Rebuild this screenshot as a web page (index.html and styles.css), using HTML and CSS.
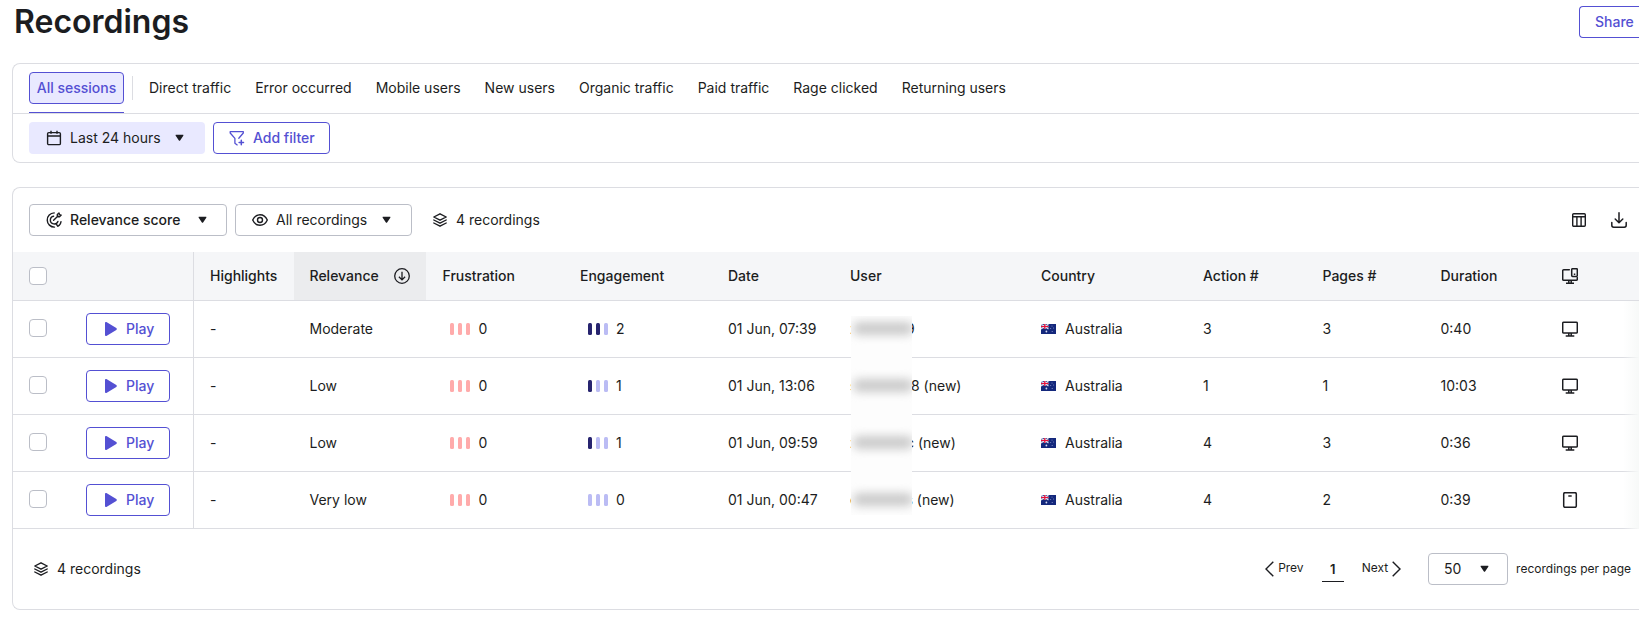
FILE: index.html
```html
<!DOCTYPE html>
<html lang="en">
<head>
<meta charset="utf-8">
<title>Recordings</title>
<link rel="stylesheet" href="styles.css">
</head>
<body>
<svg class="sprite" aria-hidden="true">
  <symbol id="i-caret" viewBox="0 0 9 8"><path d="M1.2.8h6.6c.6 0 .8.5.5.9L5.1 6.4c-.3.5-.9.5-1.2 0L.7 1.7C.4 1.300.6.8 1.200.8z" fill="currentColor"/></symbol>
  <symbol id="i-calendar" viewBox="0 0 16 16"><g fill="none" stroke="currentColor" stroke-width="1.400"><rect x="1.600" y="2.600" width="12.800" height="12" rx="1.200"/><path d="M1.600 6h12.800M5 .8v3M11 .8v3"/></g></symbol>
  <symbol id="i-filter" viewBox="0 0 16 16"><g fill="none" stroke="currentColor" stroke-width="1.300" stroke-linejoin="round" stroke-linecap="round"><path d="M9.800 8.200 14.300 3V1.600H1.200V3l4.700 5.400v4.800l2.300 1.700"/><path d="M12.300 10.300v4.400M10.100 12.500h4.400" stroke-width="1.500"/></g></symbol>
  <symbol id="i-target" viewBox="0 0 16 16"><g fill="none" stroke="currentColor" stroke-width="1.400" stroke-linecap="round" stroke-linejoin="round"><path d="M8.200.9A7.100 7.100 0 0 0 8.500 15.100"/><path d="M7.600 4.200a3.900 3.900 0 1 0 4.300 5.200"/><path d="M7.600 8.300 12 4M11.300 4.700V2.600L13 .9l.5 1.700 1.700.5-1.700 1.700z"/><path d="M15 9.600c-.2 1.500-.8 2.600-1.600 3.500l-1.500 1.200-1.700-2.300"/></g></symbol>
  <symbol id="i-eye" viewBox="0 0 16 16"><g fill="none" stroke="currentColor" stroke-width="1.400"><path d="M.7 8C2.200 4.600 4.900 2.700 8 2.700S13.800 4.600 15.300 8c-1.500 3.400-4.200 5.300-7.300 5.300S2.200 11.400.7 8z" stroke-linejoin="round"/><circle cx="8" cy="8" r="2.500"/></g></symbol>
  <symbol id="i-layers" viewBox="0 0 14 14"><g fill="none" stroke="currentColor" stroke-width="1.400" stroke-linejoin="round" stroke-linecap="round"><path d="m7 .8 6.200 3.200L7 7.200.8 4z"/><path d="M.8 7 7 10.200 13.200 7M.8 10 7 13.200 13.200 10"/></g></symbol>
  <symbol id="i-table" viewBox="0 0 14 14"><g fill="none" stroke="currentColor" stroke-width="1.400"><rect x=".7" y=".7" width="12.600" height="12.600" rx="1"/><path d="M.7 3.800h12.600M4.900 3.800v9.500M9.100 3.800v9.500"/></g></symbol>
  <symbol id="i-download" viewBox="0 0 16 16"><g fill="none" stroke="currentColor" stroke-width="1.500" stroke-linecap="round" stroke-linejoin="round"><path d="M8 .8v9.800M4.200 7 8 10.700 11.800 7M.8 10.500v2.800c0 1.200.8 1.900 1.900 1.900h10.600c1.100 0 1.900-.7 1.900-1.900v-2.800"/></g></symbol>
  <symbol id="i-sort" viewBox="0 0 16 16"><g fill="none" stroke="currentColor" stroke-width="1.300"><circle cx="8" cy="8" r="7.300"/><path d="M8 3.800v8M4.900 8.800 8 11.900l3.100-3.100"/></g></symbol>
  <symbol id="i-devices" viewBox="0 0 16 16"><g fill="none" stroke="currentColor" stroke-width="1.500"><path d="M7.300 1.700H1.700a1 1 0 0 0-1 1v8.600a1 1 0 0 0 1 1h12.600a1 1 0 0 0 1-1V9.500" stroke-linecap="round"/><rect x="9.700" y=".7" width="5.600" height="7.800" rx=".9"/><path d="M6.800 12.300v2.500M9.200 12.300v2.500M4 15.200h8M11.800 6.300h1.500"/></g></symbol>
  <symbol id="i-desktop" viewBox="0 0 16 16"><g fill="none" stroke="currentColor" stroke-width="1.500"><rect x=".7" y="1.200" width="14.600" height="10.700" rx="1"/><path d="M6.800 12v2.500M9.200 12v2.500M3.700 15h8.600"/></g></symbol>
  <symbol id="i-tablet" viewBox="0 0 16 16"><g fill="none" stroke="currentColor" stroke-width="1.500"><rect x="1.700" y=".7" width="12.600" height="14.600" rx="1.200"/><path d="M6.300 4h3.400"/></g></symbol>
  <symbol id="i-play" viewBox="0 0 12 14"><path d="M1.400.1 11.300 6.100c.7.400.7 1.400 0 1.800L1.400 13.900C.7 14.200 0 13.900 0 13V1C0 .1.700-.2 1.400.1z" fill="currentColor"/></symbol>
  <symbol id="i-prev" viewBox="0 0 9 16"><path d="M8.300.7 1 8l7.300 7.300" fill="none" stroke="currentColor" stroke-width="1.400"/></symbol>
  <symbol id="i-next" viewBox="0 0 9 16"><path d="M.7.7 8 8 .7 15.300" fill="none" stroke="currentColor" stroke-width="1.400"/></symbol>
  <symbol id="flag-au" viewBox="0 0 15 10"><path fill="#14287c" d="M0 0h15v10H0z"/><path d="m0 0 7.500 5M7.500 0 0 5" stroke="#dfe3f3" stroke-width="1.100"/><path d="M3.750 0v5M0 2.500h7.500" stroke="#f3d5de" stroke-width="1.800"/><path d="M3.750 0v5M0 2.500h7.500" stroke="#e4103a" stroke-width="1.200"/><circle cx="5.400" cy="7.500" r=".9" fill="#d5daf0"/><g fill="#8f9bd0"><circle cx="11" cy="2" r=".5"/><circle cx="9.700" cy="4.500" r=".5"/><circle cx="12.600" cy="4" r=".5"/><circle cx="11.200" cy="7.500" r=".6"/></g></symbol>
</svg>

<header class="page-head">
  <h1 class="page-title">Recordings</h1>
  <button class="btn btn-outline share">Share</button>
</header>

<section class="card filters">
  <nav class="tabs">
    <div class="tab-active"><a class="pill">All sessions</a></div>
    <i class="tab-sep"></i>
    <a class="tab">Direct traffic</a>
    <a class="tab">Error occurred</a>
    <a class="tab">Mobile users</a>
    <a class="tab">New users</a>
    <a class="tab">Organic traffic</a>
    <a class="tab">Paid traffic</a>
    <a class="tab">Rage clicked</a>
    <a class="tab">Returning users</a>
  </nav>
  <div class="filter-row">
    <button class="btn btn-date"><svg class="ic16"><use href="#i-calendar"/></svg>Last 24 hours<svg class="caret"><use href="#i-caret"/></svg></button>
    <button class="btn btn-outline btn-add"><svg class="ic16"><use href="#i-filter"/></svg>Add filter</button>
  </div>
</section>

<section class="card list">
  <div class="toolbar">
    <button class="btn btn-select score"><svg class="ic16"><use href="#i-target"/></svg>Relevance score<svg class="caret"><use href="#i-caret"/></svg></button>
    <button class="btn btn-select all"><svg class="ic16"><use href="#i-eye"/></svg>All recordings<svg class="caret"><use href="#i-caret"/></svg></button>
    <span class="count"><svg class="ic14"><use href="#i-layers"/></svg>4 recordings</span>
    <span class="tools"><svg class="ic14"><use href="#i-table"/></svg><svg class="ic16"><use href="#i-download"/></svg></span>
  </div>

  <div class="table">
    <div class="row head">
      <div class="cell lead"><i class="check"></i></div>
      <div class="cell">Highlights</div>
      <div class="cell rel sorted">Relevance<svg class="ic16"><use href="#i-sort"/></svg></div>
      <div class="cell">Frustration</div>
      <div class="cell">Engagement</div>
      <div class="cell">Date</div>
      <div class="cell">User</div>
      <div class="cell">Country</div>
      <div class="cell">Action #</div>
      <div class="cell">Pages #</div>
      <div class="cell">Duration</div>
      <div class="cell"><svg class="ic16"><use href="#i-devices"/></svg></div>
    </div>
    <div class="row">
      <div class="cell lead"><i class="check"></i><button class="btn btn-outline play"><svg><use href="#i-play"/></svg>Play</button></div>
      <div class="cell">-</div>
      <div class="cell rel">Moderate</div>
      <div class="cell score-cell"><span class="bars frus"><i></i><i></i><i></i></span>0</div>
      <div class="cell score-cell"><span class="bars eng"><i class="on"></i><i class="on"></i><i></i></span>2</div>
      <div class="cell">01 Jun, 07:39</div>
      <div class="cell"><span class="uid uid-a">z</span>9</div>
      <div class="cell"><svg class="flag"><use href="#flag-au"/></svg>Australia</div>
      <div class="cell">3</div>
      <div class="cell">3</div>
      <div class="cell">0:40</div>
      <div class="cell"><svg class="ic16"><use href="#i-desktop"/></svg></div>
    </div>
    <div class="row">
      <div class="cell lead"><i class="check"></i><button class="btn btn-outline play"><svg><use href="#i-play"/></svg>Play</button></div>
      <div class="cell">-</div>
      <div class="cell rel">Low</div>
      <div class="cell score-cell"><span class="bars frus"><i></i><i></i><i></i></span>0</div>
      <div class="cell score-cell"><span class="bars eng"><i class="on"></i><i></i><i></i></span>1</div>
      <div class="cell">01 Jun, 13:06</div>
      <div class="cell"><span class="uid uid-b">s</span>8 (new)</div>
      <div class="cell"><svg class="flag"><use href="#flag-au"/></svg>Australia</div>
      <div class="cell">1</div>
      <div class="cell">1</div>
      <div class="cell">10:03</div>
      <div class="cell"><svg class="ic16"><use href="#i-desktop"/></svg></div>
    </div>
    <div class="row">
      <div class="cell lead"><i class="check"></i><button class="btn btn-outline play"><svg><use href="#i-play"/></svg>Play</button></div>
      <div class="cell">-</div>
      <div class="cell rel">Low</div>
      <div class="cell score-cell"><span class="bars frus"><i></i><i></i><i></i></span>0</div>
      <div class="cell score-cell"><span class="bars eng"><i class="on"></i><i></i><i></i></span>1</div>
      <div class="cell">01 Jun, 09:59</div>
      <div class="cell"><span class="uid uid-c">z</span>c (new)</div>
      <div class="cell"><svg class="flag"><use href="#flag-au"/></svg>Australia</div>
      <div class="cell">4</div>
      <div class="cell">3</div>
      <div class="cell">0:36</div>
      <div class="cell"><svg class="ic16"><use href="#i-desktop"/></svg></div>
    </div>
    <div class="row">
      <div class="cell lead"><i class="check"></i><button class="btn btn-outline play"><svg><use href="#i-play"/></svg>Play</button></div>
      <div class="cell">-</div>
      <div class="cell rel">Very low</div>
      <div class="cell score-cell"><span class="bars frus"><i></i><i></i><i></i></span>0</div>
      <div class="cell score-cell"><span class="bars eng"><i></i><i></i><i></i></span>0</div>
      <div class="cell">01 Jun, 00:47</div>
      <div class="cell"><span class="uid uid-d">e</span>s (new)</div>
      <div class="cell"><svg class="flag"><use href="#flag-au"/></svg>Australia</div>
      <div class="cell">4</div>
      <div class="cell">2</div>
      <div class="cell">0:39</div>
      <div class="cell"><svg class="ic16"><use href="#i-tablet"/></svg></div>
    </div>
    <!-- hides the user ids -->
    <div class="redact"><i></i><i></i><i></i><i></i></div>
    <div class="edge-fade"></div>
  </div>

  <footer class="foot">
    <span class="count"><svg class="ic14"><use href="#i-layers"/></svg>4 recordings</span>
    <div class="pager">
      <a class="step prev"><svg><use href="#i-prev"/></svg><span>Prev</span></a>
      <b class="page-no">1</b>
      <a class="step next"><span>Next</span><svg><use href="#i-next"/></svg></a>
      <button class="btn btn-select size">50<svg class="caret"><use href="#i-caret"/></svg></button>
      <span class="per-page">recordings per page</span>
    </div>
  </footer>
</section>
</body>
</html>
```

FILE: styles.css
```css
* { box-sizing: border-box; }

body {
  margin: 0;
  height: 617px;
  overflow: hidden;
  background: #fff;
  color: #1c1d21;
  font: 400 14px/20px Inter, "Liberation Sans", sans-serif;
}

.sprite { position: absolute; width: 0; height: 0; }
svg { display: block; flex: none; }
.ic16 { width: 16px; height: 16px; }
.ic14 { width: 14px; height: 14px; }
.caret { width: 9px; height: 8px; }

.page-head {
  display: flex;
  justify-content: space-between;
  align-items: flex-start;
  height: 63px;
  padding-left: 14px;
}
.page-title {
  margin: 2px 0 0;
  font-size: 32px;
  line-height: 40px;
  font-weight: 600;
}

.btn {
  display: flex;
  align-items: center;
  height: 32px;
  margin: 0;
  padding: 0;
  border: 1px solid transparent;
  border-radius: 4px;
  background: #fff;
  color: inherit;
  font: inherit;
  white-space: nowrap;
}
.btn-outline {
  border-color: #5450d3;
  color: #5450d3;
  font-weight: 550;
}
.share {
  width: 60px;
  margin-top: 6px;
  padding-left: 15px;
  border-right: 0;
  border-radius: 4px 0 0 4px;
}

.card {
  margin-left: 12px;
  border: 1px solid #dcdde2;
  border-right: 0;
  border-radius: 8px 0 0 8px;
}

.filters { height: 100px; }
.tabs {
  display: flex;
  align-items: flex-start;
  height: 50px;
  padding: 8px 0 0 16px;
  border-bottom: 1px solid #dcdde2;
}
.tab-active {
  width: 95px;
  height: 41px;
  border-bottom: 1px solid #5450d3;
}
.pill {
  display: flex;
  justify-content: center;
  align-items: center;
  height: 32px;
  border: 1px solid #5450d3;
  border-radius: 4px;
  background: #e9e9ff;
  color: #5450d3;
  font-weight: 500;
}
.tab-sep {
  width: 1px;
  height: 24px;
  margin: 4px 4px 0 8px;
  background: #dcdde2;
}
.tab { padding: 6px 12px; white-space: nowrap; }

.filter-row { display: flex; gap: 8px; padding: 8px 16px; }
.btn-date { width: 176px; padding-left: 16px; gap: 8px; background: #e9e9ff; }
.btn-date .caret { margin-left: 6px; }
.btn-add { width: 117px; padding-left: 15px; gap: 8px; }

.list { height: 423px; margin-top: 24px; }
.toolbar { display: flex; align-items: center; height: 64px; padding-left: 16px; }
.btn-select { border-color: #bbbec7; }
.score { width: 198px; padding-left: 16px; gap: 8px; font-weight: 550; }
.all { width: 177px; margin-left: 8px; padding-left: 16px; gap: 8px; }
.score .caret { margin-left: 10px; }
.all .caret { margin-left: 7px; }
.count { display: flex; align-items: center; gap: 9px; }
.toolbar .count { margin-left: 21px; }
.tools { display: flex; align-items: center; gap: 25px; margin-left: auto; margin-right: 12px; }

.table { position: relative; }
.row {
  display: grid;
  grid-template-columns: 181px 100px 132px 138px 148px 122px 191px 162px 119.500px 118px 121.500px 1fr;
  height: 57px;
  border-bottom: 1px solid #dcdde2;
}
.head { height: 49px; background: #f5f6f8; font-weight: 500; }
.cell { display: flex; align-items: center; padding-left: 16px; white-space: nowrap; }
.cell:nth-child(4) { padding-left: 16.500px; }
.lead { border-right: 1px solid #dcdde2; }
.rel { padding-left: 15.500px; }
.sorted { background: #ebecee; gap: 15px; }
.check {
  width: 18px;
  height: 18px;
  border: 1px solid #bbbec7;
  border-radius: 4px;
  background: #fff;
}
.row:not(.head) .check { margin-bottom: 2px; }
.play { width: 84px; margin-left: 39px; padding-left: 18px; gap: 9px; font-weight: 500; }
.play svg { width: 12px; height: 14px; }

.row .score-cell { padding-left: 24px; }
.bars { display: flex; gap: 4px; margin-right: 8px; }
.bars.frus { margin-right: 8.500px; }
.bars i { width: 4px; height: 12px; border-radius: 1.500px; }
.frus i { background: #ffabab; }
.eng i { background: #bbbcf4; }
.eng .on { background: #27246f; }

.flag { width: 15px; height: 10px; margin-right: 9px; }
.uid { display: inline-block; overflow: hidden; }
.uid-a { width: 56px; }
.uid-b { width: 61px; }
.uid-c { width: 56px; }
.uid-d { width: 55.500px; }

.redact {
  position: absolute;
  left: 838px;
  top: 64px;
  width: 61px;
  height: 199px;
  padding-top: 6px;
  overflow: hidden;
  background: #fdfdfd;
}
.redact i {
  display: block;
  width: 60px;
  height: 13px;
  margin: 0 0 44px 2px;
  border-radius: 6px;
  background: #cacaca;
  filter: blur(5px);
}
.edge-fade {
  position: absolute;
  top: 49px;
  right: 0;
  width: 16px;
  height: 228px;
  background: linear-gradient(to right, rgba(247, 249, 248, 0), #f7f9f8);
}

.foot { display: flex; align-items: center; height: 80px; padding-left: 21px; }
.pager { display: flex; align-items: center; margin-left: auto; margin-right: 8px; }
.step { display: flex; align-items: center; gap: 4px; font-size: 12px; }
.step span { margin-bottom: 2px; }
.step svg { width: 9px; height: 16px; }
.page-no {
  width: 22px;
  height: 26px;
  margin: 0 18px;
  padding-top: 3px;
  border-bottom: 1px solid #1c1d21;
  font-size: 13px;
  font-weight: 600;
  text-align: center;
}
.size { width: 80px; margin-left: 27px; padding-left: 15px; }
.size .caret { margin-left: 19px; }
.per-page { margin-left: 8px; font-size: 12px; }
```
